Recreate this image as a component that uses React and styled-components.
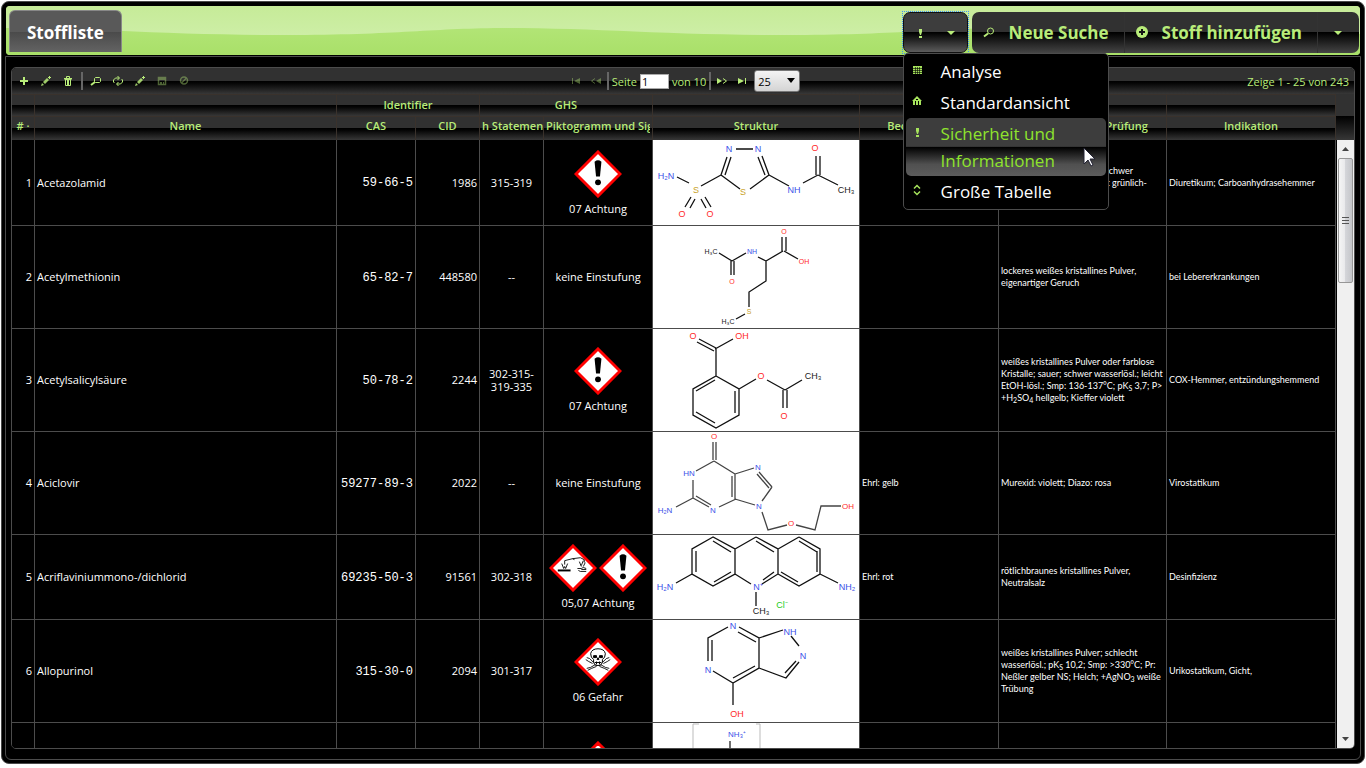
import React from 'react';
import styled, { createGlobalStyle, css } from 'styled-components';

const GREEN = '#b8ec79';
const LINE = '#4c4c4c';

const Global = createGlobalStyle`
  * { box-sizing: border-box; }
  body { margin: 0; background: #fff; font-family: "Open Sans", "Noto Sans", sans-serif; }
  button, input, select { font-family: inherit; }
`;

const gloss = css`
  background: linear-gradient(#313131 0%, #313131 49%, #000 50%, #050505 58%, #373737 100%);
`;

const Shell = styled.main`
  display: flex;
  flex-direction: column;
  height: calc(100vh - 5px);
  margin: 1px;
  padding: 4px;
  background: #000;
  border: 1px solid #4a4a4a;
  border-radius: 8px;
`;

const TabBar = styled.header`
  position: relative;
  flex: none;
  display: flex;
  justify-content: space-between;
  align-items: flex-start;
  height: 49px;
  padding: 4px 1px 0 3px;
  border-radius: 4px;
  background: #ade36f;
  margin-bottom: 1px;
`;

const Wave = styled.svg`
  position: absolute;
  inset: 0;
  width: 100%;
  height: 100%;
  border-radius: 4px;
`;

const Tab = styled.h1`
  position: relative;
  margin: 0;
  height: 42px;
  padding: 0 17px;
  font-size: 17px;
  line-height: 43px;
  color: #fff;
  border: 1px solid #888;
  border-bottom: 0;
  border-radius: 6px 6px 0 0;
  background: linear-gradient(#595959 0%, #595959 50%, #4a4a4a 51%, #636363 100%);
`;

const Actions = styled.div`
  position: relative;
  display: flex;
  align-items: flex-start;
  gap: 4px;
  padding-top: 2px;
`;

const Group = styled.div`
  display: flex;
  height: 41px;
  border-radius: 7px;
  overflow: hidden;
`;

const ViewWrap = styled.div`
  position: relative;
  outline: 1px dotted #3f93f5;
`;

const ViewButton = styled.button`
  display: flex;
  align-items: center;
  justify-content: space-between;
  width: 65px;
  height: 41px;
  padding: 0 8px;
  margin: 0;
  border: 1px solid #111;
  border-radius: 7px;
  color: ${GREEN};
  background: linear-gradient(#3d3d3d 0%, #3d3d3d 49%, #000 50%, #5c5c5c 100%);
`;

const ActionButton = styled.button`
  display: flex;
  align-items: center;
  gap: 12px;
  padding: ${p => (p.$last ? '0 13px 0 12px' : '0 15px 0 9px')};
  border: 0;
  border-right: ${p => (p.$last ? 0 : '1px solid #333')};
  color: ${GREEN};
  font-size: 17px;
  line-height: 24px;
  font-weight: 700;
  white-space: nowrap;
  background: linear-gradient(#313131 0%, #313131 49%, #000 50%, #454545 100%);
`;

const Menu = styled.ul`
  position: absolute;
  z-index: 5;
  top: 41px;
  left: 0;
  width: 206px;
  margin: 0;
  padding: 2px;
  list-style: none;
  background: #000;
  border: 1px solid ${LINE};
  border-radius: 5px;
`;

const MenuLink = styled.a`
  display: flex;
  gap: 16px;
  padding: 2px 3px;
  font-size: 17px;
  line-height: 27px;
  border-radius: 5px;
  text-decoration: none;
  color: ${p => (p.$active ? '#8fe42d' : '#fff')};
  background: ${p => (p.$active ? 'linear-gradient(#3d3d3d 0%, #3d3d3d 49%, #000 50%, #505050 80%, #5c5c5c 100%)' : 'none')};
  svg { margin-top: 4px; color: #a6e35c; }
`;

const Pointer = styled.svg`
  position: absolute;
  z-index: 6;
  top: 135px;
  left: 180px;
`;

const Content = styled.section`
  flex: 1;
  min-height: 0;
  display: flex;
  padding: 10px 5px;
  border: 1px solid ${LINE};
  border-radius: 0 0 6px 6px;
  margin: 0 -1px -1px;
`;

const Grid = styled.div`
  flex: 1;
  min-width: 0;
  display: flex;
  flex-direction: column;
  border: 1px solid ${LINE};
  border-radius: 5px;
  overflow: hidden;
  color: ${GREEN};
  font-size: 11px;
`;

const Toolbar = styled.div`
  flex: none;
  display: grid;
  grid-template-columns: 1fr auto 1fr;
  align-items: center;
  height: 26px;
  padding: 0 5px 0 4px;
  ${gloss}
`;

const Tools = styled.div`
  display: flex;
  align-items: center;
  gap: 6px;
`;

const Pager = styled.div`
  display: flex;
  align-items: center;
  gap: 4px;
  padding-left: 3px;
  white-space: nowrap;
`;

const IconButton = styled.button`
  display: grid;
  place-items: center;
  width: 16px;
  height: 16px;
  padding: 0;
  border: 0;
  background: none;
  color: ${GREEN};
  opacity: ${p => (p.disabled ? 0.4 : 1)};
`;

const Divider = styled.span`
  width: 2px;
  height: 18px;
  margin: 0 -1px;
  background: #666;
`;

const PageLabel = styled.label`
  display: flex;
  align-items: center;
  gap: 3px;
`;

const PageInput = styled.input`
  width: 29px;
  height: 15px;
  padding: 0 1px;
  border: 1px solid #aaa;
  font-size: 11px;
  background: #fff;
  color: #000;
`;

const SizeSelect = styled.select`
  width: 46px;
  height: 22px;
  padding: 0 3px;
  appearance: none;
  border: 1px solid #777;
  border-radius: 3px;
  font-size: 11px;
  color: #000;
  background: linear-gradient(#f4f4f4, #d4d4d4);
`;

const SizeWrap = styled.span`
  position: relative;
  display: flex;
  svg { position: absolute; right: 5px; top: 8px; pointer-events: none; }
`;

const Status = styled.span`
  justify-self: end;
`;

const Frame = styled.div`
  flex: 1;
  min-height: 0;
  display: flex;
`;

const Scroller = styled.div`
  flex: 1;
  min-width: 0;
  overflow: hidden;
`;

const Table = styled.table`
  width: 100%;
  table-layout: fixed;
  border-collapse: separate;
  border-spacing: 0;
`;

const Th = styled.th`
  height: ${p => (p.$group ? 22 : 24)}px;
  padding: ${p => (p.$group ? '0 2px 2px' : '0 2px 6px')};
  overflow: hidden;
  white-space: nowrap;
  text-overflow: clip;
  font-size: 11px;
  font-weight: 600;
  line-height: 15px;
  border-right: 1px solid #3a322c;
  border-top: 1px solid #3a322c;
  ${gloss}
`;

const ThClip = styled.div`
  display: flex;
  justify-content: flex-start;
  overflow: hidden;
`;

const Td = styled.td`
  height: ${p => p.$h}px;
  padding: 0 2px 1px;
  border-right: 1px solid ${LINE};
  border-bottom: 1px solid ${LINE};
  color: #fff;
  background: #000;
  font-size: 11px;
  line-height: 13px;
  text-align: ${p => p.$align || 'left'};
  overflow: hidden;
`;

const CodeTd = styled(Td)`
  padding: 2px 2px 0;
  font-family: "Liberation Mono", monospace;
  font-size: 12px;
`;

const NoteTd = styled(Td)`
  padding: 0 2px;
  font-family: Lato, "Open Sans", sans-serif;
  font-size: 9px;
  line-height: 12px;
  sub { font-size: 7px; line-height: 8px; vertical-align: -2px; }
`;

const DrawingTd = styled(Td)`
  padding: 0;
  background: #fff;
  svg { display: block; width: 100%; }
`;

const Signs = styled.div`
  display: flex;
  justify-content: center;
  gap: 2px;
  margin-bottom: 4px;
`;

const Side = styled.div`
  flex: none;
  width: 18px;
  display: flex;
  flex-direction: column;
`;

const SideCap = styled.div`
  flex: none;
  height: ${p => p.$h}px;
  ${p => (p.$plain ? 'background: #313131;' : 'background: linear-gradient(#000, #373737);')}
`;

const ScrollTrack = styled.div`
  flex: 1;
  display: flex;
  flex-direction: column;
  align-items: center;
  justify-content: space-between;
  margin-left: 1px;
  background: #f0f0f0;
`;

const ScrollTop = styled.div`
  width: 100%;
  display: flex;
  flex-direction: column;
  align-items: center;
`;

const ScrollButton = styled.button`
  display: grid;
  place-items: center;
  width: 16px;
  height: 18px;
  padding: 0;
  border: 0;
  background: none;
`;

const Thumb = styled.div`
  display: grid;
  place-items: center;
  width: 15px;
  height: 125px;
  border: 1px solid #979797;
  border-radius: 2px;
  background: linear-gradient(90deg, #f5f5f5 0%, #e9e9eb 45%, #d4d5d9 50%, #c4c5c9 100%);
`;

const ICONS = {
  plus: <path d="M7 4h2v3h3v2H9v3H7V9H4V7h3z" fill="currentColor" />,
  pencil: <g fill="currentColor"><path d="M3 13l1-3 1 1 1 1zM5 9l4-4 2 2-4 4z" opacity=".85" /><path d="M10 4h1V3h1v1h1v1h-1v1h-1V5h-1z" /></g>,
  trash: <g stroke="currentColor" fill="none"><path d="M4 5.500h8M6.500 5V3.500h3V5M4.500 6.500h7M5.500 7v5.500h5V7M7.500 7v5M8.500 7v5" /></g>,
  search: <g stroke="currentColor" fill="none"><path d="M7.500 4.500h4l1 1v3l-1 1h-4l-1-1v-3z" /><path d="M7 9l-4 3" strokeWidth="2" /></g>,
  refresh: <g stroke="currentColor" fill="none"><path d="M4.500 10l-1-1V7l2-2H9M7.500 3l2 2-2 2M11.500 6l1 1v2l-2 2H7M8.500 9l-2 2 2 2" /></g>,
  save: <g><path d="M4.500 4.500h7v7h-7z" fill="none" stroke="currentColor" strokeWidth="1.500" /><path d="M5 4h6v3H5zM6 9h2v3H6zM9 9h1v3H9z" fill="currentColor" /></g>,
  cancel: <g stroke="currentColor" fill="none" strokeWidth="1.500"><circle cx="8" cy="7.500" r="3.500" /><path d="M5.500 10l5-5" /></g>,
  first: <path d="M4 5h1v6H4zM12 5v6L6 8z" fill="currentColor" />,
  prev: <g><path d="M13 5v6L8 8z" fill="currentColor" /><path d="M7 5.500L3.500 8 7 10.500" stroke="currentColor" fill="none" /></g>,
  next: <g><path d="M3 5v6l5-3z" fill="currentColor" /><path d="M9 5.500L12.500 8 9 10.500" stroke="currentColor" fill="none" /></g>,
  last: <path d="M11 5h1v6h-1zM4 5v6l6-3z" fill="currentColor" />,
  alert: <path d="M7 4h3v3l-1 3H8L7 7zM7 11h3v2H7z" fill="currentColor" />,
  down: <path d="M4 6h8l-4 4z" fill="currentColor" />,
  lens: <g stroke="currentColor" fill="none"><circle cx="9.500" cy="6" r="3" /><path d="M7 8.500l-4 3" strokeWidth="2" /></g>,
  circlePlus: <g><circle cx="8" cy="7" r="6" fill="currentColor" /><path d="M8 4v6M5 7h6" stroke="#151515" strokeWidth="2" /></g>,
  table: <g><path d="M4 4h9v8H4z" fill="currentColor" /><path d="M4 6.500h9M4 8.500h9M4 10.500h9M6.500 5v7M8.500 5v7M10.500 5v7" stroke="#000" strokeWidth=".6" /></g>,
  home: <g><path d="M8 3l5 5H3zM4 8h8v4H4z" fill="currentColor" /><path d="M6 8h1v4H6zM9 8h1v4H9zM7 6h2v1H7z" fill="#000" /></g>,
  updown: <path d="M5 6.500l3-3 3 3M5 9.500l3 3 3-3" fill="none" stroke="currentColor" strokeWidth="1.500" />,
};

const Icon = ({ name, size = 16 }) => (
  <svg width={size} height={size} viewBox="0 0 16 16" aria-hidden="true">{ICONS[name]}</svg>
);

const SIGN_ART = {
  alert: <g><path d="M21 12q3.500-3 7 0l-1.500 15h-4z" /><circle cx="24.500" cy="33" r="3" /></g>,
  corrosive: (
    <g>
      <path d="M9 26h13v2H9z" />
      <path d="M16 21v-4l8-2 2 1M24 15l8-1 4 2v3M13 20l2 5 1-2 1 2 2-5M31 18l2 5M35 17l-2 5M37 19l-2 4M29 25h4l2-1 3 1M30 27l2 1h6M33 26h5" fill="none" stroke="#000" strokeWidth=".9" />
    </g>
  ),
  skull: (
    <g fill="none" stroke="#000">
      <path d="M20 25v-3q-3-2-3-6 1-5 7.500-5t7.500 5q0 4-3 6v3l-2 3h-5z" fill="#fff" />
      <path d="M20 18h3v2h-3zM26 18h3v2h-3z" fill="#000" />
      <path d="M24.500 20l-1 2h2zM21 25h7M23 24v3M26 24v3" />
      <path d="M13 20l3 1 4 4M36 20l-3 1-4 4M13 31l4-1 5-3M36 31l-4-1-5-3M12 22l3 2 4 2M37 22l-3 2-4 2M14 33l4-2 5-2M35 33l-4-2-5-2" strokeWidth=".9" />
    </g>
  ),
};

const Sign = ({ kind }) => (
  <svg width="48" height="48" viewBox="0 0 49 49" role="img" aria-label={kind}>
    <path d="M24.500 2L47 24.500 24.500 47 2 24.500z" fill="#fff" stroke="#f00" strokeWidth="3" />
    {SIGN_ART[kind]}
  </svg>
);

const N = '#3a50e8', O = '#ff2a2a', S = '#c9a227', K = '#222', CL = '#22cc22';

const MOLECULES = {
  acetazolamid: {
    h: 85, size: 9,
    d: 'M83 9h17M74 17l-6 18M78 17l-6 18M68 35l19 14M109 16l7 19M105 17l7 18M116 35l-19 14M68 35l-20 11M36 43l-12-6M38 57l-6 10M42 59l-5 9M48 59l5 9M52 57l6 10M116 35l20 11M150 43l15-8M163 35V16M167 35V16M165 35l20 10',
    t: [[76, 12, 'N', N], [105, 12, 'N', N], [90, 55, 'S', S], [43, 53, 'S', S], [13, 39, 'H₂N', N], [29, 77, 'O', O], [57, 77, 'O', O], [141, 53, 'NH', N], [162, 11, 'O', O], [193, 53, 'CH₃', K]],
  },
  acetylmethionin: {
    h: 102, size: 7,
    d: 'M66 27l13 8M78 35v14M81 35v14M79 35l14-8M105 31l8 4M113 35l17-10M129 25V11M133 25V11M131 25l14 8M113 35v20l-17 11v15M92 88l-9 5',
    t: [[58, 28, 'H₃C', K], [99, 28, 'NH', N], [79, 58, 'O', O], [131, 8, 'O', O], [151, 38, 'OH', O], [96, 88, 'S', S], [75, 98, 'H₃C', K]],
  },
  acetylsalicyl: {
    h: 102, size: 9,
    d: 'M46 10l17 9M44 13l17 9M62 20l18-10M63 20v27M63 47l23 13v26l-23 13-23-13V60zM62 51l-19 11M82 62v22M62 94l-19-11M86 60l17-10M114 51l18 10M130 61v18M134 61v18M132 61l17-10',
    t: [[40, 10, 'O', O], [89, 10, 'OH', O], [108, 50, 'O', O], [131, 90, 'O', O], [160, 50, 'CH₃', K]],
  },
  aciclovir: {
    h: 102, size: 8, color: '#444',
    d: 'M60 28V10M63 28V10M61 29l-18 10M40 48v18M40 66l-17 9M40 66l16 9M43 64l15 9M66 75l17-8M82 67V42M79 65V44M61 29l21 13M82 42l19-6M106 40l13 15M104 42l12 14M119 55l-10 14M82 67l20 6M109 80l6 18 19-5M143 93l19 5 6-24h20',
    t: [[61, 7, 'O', O], [36, 44, 'HN', N], [12, 81, 'H₂N', N], [60, 81, 'N', N], [105, 38, 'N', N], [106, 77, 'N', N], [138, 94, 'O', O], [195, 77, 'OH', O]],
  },
  acriflavin: {
    h: 84, size: 9,
    d: 'M60 2L39 14v25l21 12 22-12V14zM103 2L82 14M103 2l22 12v25l-16 10M82 39l16 10M146 2l-21 12M146 2l21 12v25l-21 12-21-12M60 6l18 11M43 16v21M61 47l17-10M103 6l18 11M146 6l18 11M164 16v21M145 47l-17-10M121 37l-11 8M39 39l-16 9M167 39l18 9M103 57v14',
    t: [[12, 55, 'H₂N', N], [105, 55, 'N⁺', N], [194, 55, 'NH₂', N], [108, 79, 'CH₃', K], [129, 73, 'Cl⁻', CL]],
  },
  allopurinol: {
    h: 102, size: 9,
    d: 'M75 7L55 18v23M59 20v21M86 7l20 11v30L80 63 60 51M85 12l18 10M102 46L80 58M106 18l24-8M138 16l8 10M146 42l-13 16-27-10M143 41l-11 12M80 63v22',
    t: [[80, 9, 'N', N], [137, 15, 'NH', N], [150, 39, 'N', N], [55, 53, 'N', N], [84, 97, 'OH', O]],
  },
  ammonium: {
    h: 102, size: 8, color: '#222',
    d: 'M77 18v50',
    t: [[84, 14, 'NH₃⁺', N]],
    frame: true,
  },
};

const Molecule = ({ name }) => {
  const m = MOLECULES[name];
  return (
    <svg height={m.h} viewBox={`0 0 206 ${m.h}`} role="img" aria-label={name}>
      {m.frame && <path d="M40 102V1h6M103 1h4v101" fill="none" stroke="#bbb" />}
      <path d={m.d} fill="none" stroke={m.color || '#111'} strokeWidth="1.300" />
      {m.t.map(([x, y, s, fill], i) => (
        <text key={i} x={x} y={y} fill={fill} fontSize={m.size} textAnchor="middle" fontFamily="Liberation Sans, sans-serif">{s}</text>
      ))}
    </svg>
  );
};

const ROWS = [
  { n: 1, name: 'Acetazolamid', cas: '59-66-5', cid: '1986', h: '315-319', signs: ['alert'], word: '07 Achtung', mol: 'acetazolamid', obs: '', test: <>weißes kristallines Pulver; schwer<br />wasserlösl.; Cu-Salze: bildet grünlich-<br />blau</>, use: 'Diuretikum; Carboanhydrasehemmer', height: 86 },
  { n: 2, name: 'Acetylmethionin', cas: '65-82-7', cid: '448580', h: '--', signs: [], word: 'keine Einstufung', mol: 'acetylmethionin', obs: '', test: 'lockeres weißes kristallines Pulver, eigenartiger Geruch', use: 'bei Lebererkrankungen', height: 103 },
  { n: 3, name: 'Acetylsalicylsäure', cas: '50-78-2', cid: '2244', h: '302-315-319-335', signs: ['alert'], word: '07 Achtung', mol: 'acetylsalicyl', obs: '', test: <>weißes kristallines Pulver oder farblose Kristalle; sauer; schwer wasserlösl.; leicht EtOH-lösl.; Smp: 136-137°C; pK<sub>S</sub> 3,7; P&gt;<br />+H<sub>2</sub>SO<sub>4</sub> hellgelb; Kieffer violett</>, use: 'COX-Hemmer, entzündungshemmend', height: 103 },
  { n: 4, name: 'Aciclovir', cas: '59277-89-3', cid: '2022', h: '--', signs: [], word: 'keine Einstufung', mol: 'aciclovir', obs: 'Ehrl: gelb', test: 'Murexid: violett; Diazo: rosa', use: 'Virostatikum', height: 103 },
  { n: 5, name: 'Acriflaviniummono-/dichlorid', cas: '69235-50-3', cid: '91561', h: '302-318', signs: ['corrosive', 'alert'], word: '05,07 Achtung', mol: 'acriflavin', obs: 'Ehrl: rot', test: 'rötlichbraunes kristallines Pulver, Neutralsalz', use: 'Desinfizienz', height: 85 },
  { n: 6, name: 'Allopurinol', cas: '315-30-0', cid: '2094', h: '301-317', signs: ['skull'], word: '06 Gefahr', mol: 'allopurinol', obs: '', test: <>weißes kristallines Pulver; schlecht wasserlösl.; pK<sub>S</sub> 10,2; Smp: &gt;330°C; Pr: Neßler gelber NS; Helch; +AgNO<sub>3</sub> weiße Trübung</>, use: 'Urikostatikum, Gicht,', height: 103 },
  { n: '', name: '', cas: '', cid: '', h: '', signs: ['alert'], word: '\u00a0', mol: 'ammonium', obs: '', test: '', use: '', height: 103 },
];

const COLUMNS = [23, null, 79, 64, 64, 109, 207, 139, 168, 169];

const Tool = ({ name, label, disabled }) => (
  <IconButton type="button" aria-label={label} disabled={disabled}><Icon name={name} /></IconButton>
);

export default function App() {
  return (
    <>
      <Global />
      <Shell>
        <TabBar>
          <Wave aria-hidden="true">
            <defs>
              <linearGradient id="sheen" x1="0" y1="0" x2="0" y2="1">
                <stop offset="0" stopColor="#c6eb98" /><stop offset="1" stopColor="#cdeea6" />
              </linearGradient>
              <linearGradient id="base" x1="0" y1="0" x2="0" y2="1">
                <stop offset="0" stopColor="#b9e880" /><stop offset="1" stopColor="#a9e069" />
              </linearGradient>
              <pattern id="tile" width="500" height="49" patternUnits="userSpaceOnUse">
                <path d="M0 0h500v49H0z" fill="url(#base)" />
                <path d="M0 0H500V22C430 22 390 29 280 29C160 29 90 22 0 22z" fill="url(#sheen)" />
              </pattern>
            </defs>
            <rect width="100%" height="49" fill="url(#tile)" />
          </Wave>
          <Tab>Stoffliste</Tab>
          <Actions>
            <ViewWrap>
              <ViewButton type="button" aria-label="Ansicht wählen"><Icon name="alert" /><Icon name="down" /></ViewButton>
              <Menu>
                <li><MenuLink href="#analyse"><Icon name="table" />Analyse</MenuLink></li>
                <li><MenuLink href="#standard"><Icon name="home" />Standardansicht</MenuLink></li>
                <li><MenuLink href="#sicherheit" $active><Icon name="alert" /><span>Sicherheit und<br />Informationen</span></MenuLink></li>
                <li><MenuLink href="#tabelle"><Icon name="updown" />Große Tabelle</MenuLink></li>
              </Menu>
              <Pointer width="13" height="20" viewBox="0 0 13 20" aria-hidden="true">
                <path d="M1 1v16l4-4 3 6 2-1-3-6h5z" fill="#fff" stroke="#223" />
              </Pointer>
            </ViewWrap>
            <Group>
              <ActionButton type="button"><Icon name="lens" />Neue Suche</ActionButton>
              <ActionButton type="button"><Icon name="circlePlus" />Stoff hinzufügen</ActionButton>
              <ActionButton type="button" $last aria-label="Weitere Aktionen"><Icon name="down" /></ActionButton>
            </Group>
          </Actions>
        </TabBar>
        <Content>
          <Grid>
            <Toolbar>
              <Tools>
                <Tool name="plus" label="Hinzufügen" />
                <Tool name="pencil" label="Bearbeiten" />
                <Tool name="trash" label="Löschen" />
                <Divider />
                <Tool name="search" label="Suchen" />
                <Tool name="refresh" label="Neu laden" />
                <Tool name="pencil" label="Zeile bearbeiten" />
                <Tool name="save" label="Speichern" disabled />
                <Tool name="cancel" label="Abbrechen" disabled />
              </Tools>
              <Pager>
                <Tool name="first" label="Erste Seite" disabled />
                <Tool name="prev" label="Vorherige Seite" disabled />
                <Divider />
                <PageLabel>Seite<PageInput defaultValue="1" />von 10</PageLabel>
                <Divider />
                <Tool name="next" label="Nächste Seite" />
                <Tool name="last" label="Letzte Seite" />
                <SizeWrap>
                  <SizeSelect aria-label="Einträge pro Seite" defaultValue="25"><option>25</option><option>50</option></SizeSelect>
                  <svg width="8" height="5" viewBox="0 0 8 5" aria-hidden="true"><path d="M0 0h8L4 5z" /></svg>
                </SizeWrap>
              </Pager>
              <Status>Zeige 1 - 25 von 243</Status>
            </Toolbar>
            <Frame>
              <Scroller>
                <Table>
                  <colgroup>
                    {COLUMNS.map((w, i) => <col key={i} width={w || undefined} />)}
                  </colgroup>
                  <thead>
                    <tr>
                      <Th $group /><Th $group /><Th $group colSpan={2}>Identifier</Th><Th $group colSpan={2}>GHS</Th>
                      <Th $group /><Th $group /><Th $group /><Th $group />
                    </tr>
                    <tr>
                      <Th># ·</Th><Th>Name</Th><Th>CAS</Th><Th>CID</Th>
                      <Th>h Statemen</Th>
                      <Th><ThClip>Piktogramm und Signalwort</ThClip></Th>
                      <Th>Struktur</Th><Th>Beobachtungen</Th><Th>Eigenschaften &amp; Prüfung</Th><Th>Indikation</Th>
                    </tr>
                  </thead>
                  <tbody>
                    {ROWS.map((r, i) => (
                      <tr key={i}>
                        <Td $h={r.height} $align="right">{r.n}</Td>
                        <Td>{r.name}</Td>
                        <CodeTd $align="right">{r.cas}</CodeTd>
                        <Td $align="right">{r.cid}</Td>
                        <Td $align="center">{r.h}</Td>
                        <Td $align="center">
                          {r.signs.length > 0 && <Signs>{r.signs.map(s => <Sign key={s} kind={s} />)}</Signs>}
                          {r.word}
                        </Td>
                        <DrawingTd><Molecule name={r.mol} /></DrawingTd>
                        <NoteTd>{r.obs}</NoteTd>
                        <NoteTd>{r.test}</NoteTd>
                        <NoteTd>{r.use}</NoteTd>
                      </tr>
                    ))}
                  </tbody>
                </Table>
              </Scroller>
              <Side>
                <SideCap $h={22} $plain />
                <SideCap $h={24} />
                <ScrollTrack>
                  <ScrollTop>
                    <ScrollButton type="button" aria-label="Nach oben"><svg width="7" height="4" viewBox="0 0 7 4"><path d="M0 4h7L3.500 0z" fill="#444" /></svg></ScrollButton>
                    <Thumb><svg width="7" height="7" viewBox="0 0 7 7"><path d="M0 .5h7M0 3.500h7M0 6.500h7" stroke="#555" /></svg></Thumb>
                  </ScrollTop>
                  <ScrollButton type="button" aria-label="Nach unten"><svg width="7" height="4" viewBox="0 0 7 4"><path d="M0 0h7L3.500 4z" fill="#444" /></svg></ScrollButton>
                </ScrollTrack>
              </Side>
            </Frame>
          </Grid>
        </Content>
      </Shell>
    </>
  );
}
